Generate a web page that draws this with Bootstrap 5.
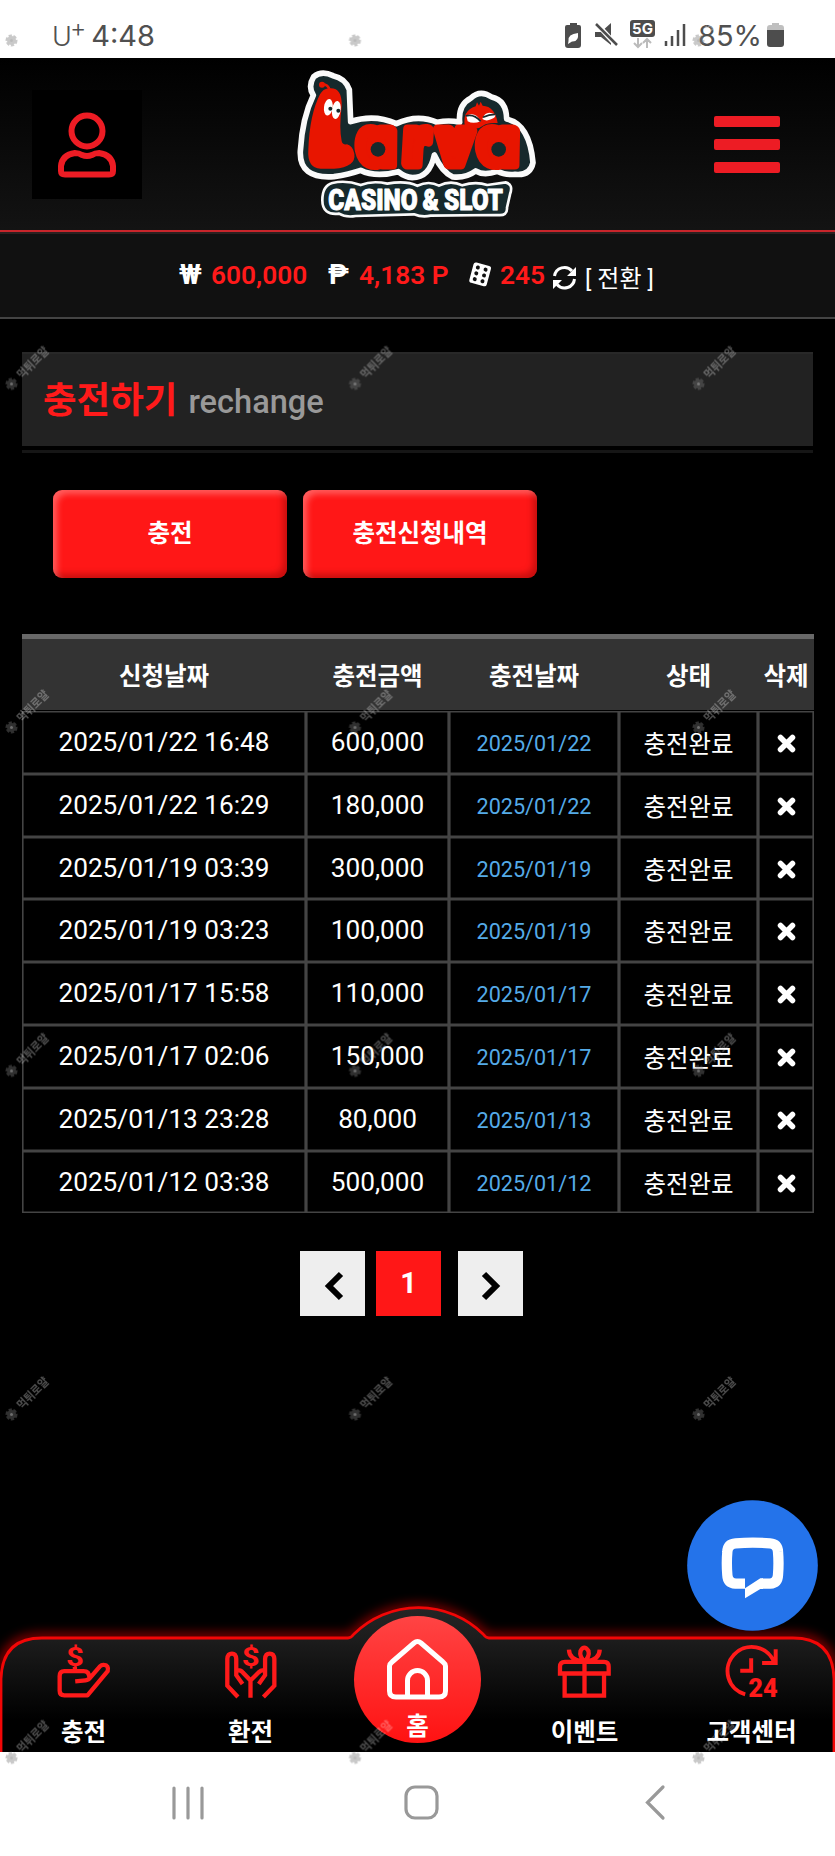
<!DOCTYPE html>
<html lang="ko">
<head>
    <meta charset="UTF-8">
    <meta name="viewport" content="width=device-width, initial-scale=1">
    <title>충전하기</title>
    <link href="https://cdn.jsdelivr.net/npm/bootstrap@5.3.0/dist/css/bootstrap.min.css" rel="stylesheet">
    <style>
        body {
            background: #000;
            color: #fff;
            font-family: Roboto, "Noto Sans CJK KR", sans-serif;
            height: 1856px;
            overflow: hidden;
            position: relative;
        }
        svg { display: block; flex: none; overflow: visible; }

        /* 상태바 */
        .status-bar {
            height: 58px;
            padding: 14px 51px 0 52px;
            background: #fff;
            color: #505050;
            font-family: Inter, sans-serif;
            font-size: 29px;
            line-height: 43px;
        }
        .status-bar sup { font-size: 25px; top: -9px; left: -2px; line-height: 0; }
        .carrier { font-size: 27px; font-weight: 300; margin-right: 3px; }

        /* 헤더 */
        .top-header {
            height: 174px;
            padding: 0 55px 0 32px;
            background: linear-gradient(#000, #131313);
            border-bottom: 2px solid #c9252b;
        }
        .user-link { width: 110px; height: 109px; padding-top: 2px; background: #000; }
        .logo { margin: -1px 0 0 -19px; }
        .hamburger span {
            display: block;
            width: 66px;
            height: 11px;
            margin-bottom: 12px;
            border-radius: 2px;
            background: #ed1c24;
        }
        .hamburger span:last-child { margin-bottom: 0; }

        .balance-bar {
            height: 87px;
            padding-left: 179px;
            background: #111;
            border-top: 2px solid #2c2020;
            border-bottom: 2px solid #444;
            font-size: 26.3px;
            font-weight: 700;
            line-height: 82px;
        }
        .balance-bar b { color: #ff1a1a; font-weight: 600; }
        .money-sign { font-size: 28px; }
        .convert { font-size: 24px; font-weight: 400; position: relative; top: 4px; }

        /* 타이틀 */
        main { padding: 33px 22px 0; }
        .page-title {
            height: 94px;
            padding-left: 21px;
            background: #222;
            border-top: 2px solid #282828;
        }
        .title-line { height: 3px; margin-top: 4px; background: #161616; }
        .page-title h1 { font-size: 36.500px; font-weight: 700; color: #ff1a1a; line-height: 94px; }
        .page-title h1 span { font-size: 32.600px; font-weight: 500; color: #999; margin-left: 2px; }

        .tab-buttons { padding: 37px 0 0 31px; gap: 16px; }
        .btn-tab {
            width: 234px;
            height: 88px;
            border: 0;
            border-radius: 9px;
            background: #ff1717;
            color: #fff;
            font-size: 24.500px;
            font-weight: 700;
            box-shadow: inset 5px 5px 6px -1px rgba(255, 255, 255, .3), inset -5px -5px 6px -1px rgba(110, 0, 0, .38);
        }

        /* 신청내역 */
        .history {
            width: 792px;
            margin: 56px 0 0;
            table-layout: fixed;
            border-collapse: separate;
            border-spacing: 0;
            text-align: center;
            color: #fff;
            font-size: 26.2px;
        }
        .history th {
            height: 77px;
            padding: 3px 0 0;
            background: #333;
            border-top: 5px solid #686868;
            border-bottom: 1px solid #000;
            font-size: 24.500px;
            line-height: 67px;
            white-space: nowrap;
        }
        .history td {
            height: 62.8px;
            padding: 0;
            border: 1.6px solid #444;
            box-shadow: inset 0 0 0 .6px #444;
            line-height: 60px;
            vertical-align: top;
            background: #000;
            color: #fff;
        }
        .history td.paid { padding-top: 4px; font-size: 21.6px; color: #55abe8; line-height: 56px; }
        .history td.state { padding-top: 5px; font-size: 24.500px; line-height: 55px; }
        .history td svg { margin: 22px auto 0; }

        .pager { gap: 12px; margin-top: 38px; padding-left: 278px; }
        .pager .page-link {
            width: 65px;
            height: 65px;
            padding: 0;
            border: 0;
            border-radius: 0 !important;
            background: #eee;
            color: #000;
            display: flex;
            align-items: center;
            justify-content: center;
        }
        .pager .active .page-link { background: #ff1717; color: #fff; font-size: 29px; font-weight: 700; }
        .pager .page-item:last-child { margin-left: 6px; }

        .chat-button { position: absolute; left: 687px; top: 1500px; }

        /* 하단 메뉴 */
        .bottom-menu { height: 115px; position: relative; }
        .menu-shape { position: absolute; left: 0; top: -60px; }
        .menu-item {
            width: 167px;
            position: relative;
            padding-top: 8px;
            color: #fff;
            font-size: 24.500px;
            font-weight: 700;
            line-height: 36px;
            text-decoration: none;
        }
        .menu-item svg { margin-bottom: 17px; }
        .home-item { padding-top: 2px; }
        .home-item svg { margin-bottom: 9px; }
        .system-nav { height: 104px; background: #fff; position: relative; }
        .system-nav svg { width: 100%; height: 104px; }
        .stamp { position: absolute; left: 0; top: 0; pointer-events: none; }
    </style>
</head>
<body class="d-flex flex-column">

    <div class="status-bar d-flex justify-content-between">
        <div><span class="carrier">U<sup>+</sup></span>4:48</div>
        <div class="d-flex">
            <svg width="132" height="30" viewBox="0 0 132 30" style="margin-top:6px" fill="#4d4d4d">
                <path d="M5 5V3h7v2h2q2 0 2 2v18q0 3-3 3H3q-3 0-3-3V7q0-2 2-2z"/>
                <path d="M3.500 21q-1-7 9.500-8q1 9-6 8.500L3 24z" fill="#fff"/>
                <path d="M30 12h6l10-9v22l-10-8h-6z"/>
                <path d="M31 3l21 23" stroke="#fff" stroke-width="5"/>
                <path d="M31 4l21 21" stroke="#4d4d4d" stroke-width="2.500"/>
                <rect x="65" y="0" width="25" height="17" rx="3"/>
                <text x="77.500" y="14" font-size="15" font-weight="700" text-anchor="middle" fill="#fff">5G</text>
                <path d="M73 18v9m-4-4l4 4l4-4M82 28v-9m-4 4l4-4l4 4" fill="none" stroke="#bbb" stroke-width="2"/>
                <path d="M101 21v5M107 16v10M113 10v16M119 4v22" stroke="#4d4d4d" stroke-width="2.500"/>
            </svg>
            <span style="width:65px" class="text-end">85%</span>
            <svg width="17" height="24" viewBox="0 0 17 24" style="margin:9px 0 0 5px">
                <path d="M5 2V0h7v2h2q3 0 3 3v3H0V5q0-3 3-3z" fill="#bfbfbf"/>
                <path d="M0 7h17v14q0 3-3 3H3q-3 0-3-3z" fill="#4d4d4d"/>
            </svg>
        </div>
    </div>

    <header class="top-header d-flex align-items-center justify-content-between">
        <a href="#" class="user-link d-flex align-items-center justify-content-center">
            <svg width="60" height="68" viewBox="0 0 60 68" fill="none" stroke="#ed1c24" stroke-width="6">
                <circle cx="30" cy="20" r="15.500"/>
                <path d="M4 60V55Q5 44 18 42Q22 42 25 44Q30 46 35 44Q38 42 42 42Q55 44 56 55V60Q56 63.500 52 63.500H8Q4 63.500 4 60Z"/>
            </svg>
        </a>
        <svg class="logo" width="280" height="165" viewBox="0 0 840 495">
            <path d="M64 270Q70 170 103 103Q86 76 104 47Q128 28 162 44Q200 52 211 86L215 182Q285 158 352 188Q415 158 475 184Q510 176 542 184Q537 132 575 112Q603 84 638 108Q682 118 683 174Q752 190 762 305Q754 345 708 340Q678 343 655 331Q615 345 590 330Q560 352 522 348Q490 335 466 282Q452 350 400 350Q378 348 358 332Q290 350 245 328Q210 340 165 347Q60 355 64 270Z" fill="#16292c" stroke="#fafafa" stroke-width="17" stroke-linejoin="round"/>
            <path d="M160 366Q200 356 245 372Q280 358 325 368Q380 358 415 374Q450 358 480 374Q515 356 550 373Q590 360 625 372L680 364Q704 370 693 400L684 440Q686 466 655 462L455 464Q430 470 405 460L230 465Q200 470 180 458Q130 464 130 418Q130 374 160 366Z" fill="#16292c" stroke="#fafafa" stroke-width="8"/>
            <!-- 빨간 애벌레 몸통 -->
            <path d="M148 82Q190 76 188 135Q180 200 188 240Q190 252 204 250Q222 256 226 278Q232 318 165 323H125Q84 322 88 265Q92 160 123 100Q132 84 148 82" fill="#e81500"/>
            <path d="M127 70Q147 68 152 88" fill="none" stroke="#e81500" stroke-width="8"/>
            <circle cx="129" cy="71" r="9" fill="#e81500"/>
            <ellipse cx="148" cy="139" rx="13" ry="25" fill="#fff" transform="rotate(8 148 139)"/>
            <ellipse cx="172" cy="147" rx="13" ry="27" fill="#fff" transform="rotate(8 172 147)"/>
            <circle cx="154" cy="143" r="6" fill="#16292c"/><circle cx="178" cy="149" r="6" fill="#16292c"/>
            <path d="M558 196Q548 150 590 136L594 124L600 134L605 122L611 134Q648 136 656 186Q625 184 612 194Q590 212 558 196Z" fill="#e81500"/>
            <path d="M562 164Q590 150 605 181Q582 190 566 181ZM610 174Q620 145 648 160Q652 170 636 175Q622 182 610 174Z" fill="#fff"/>
            <path d="M560 165Q585 158 605 181M612 169Q630 160 648 160" fill="none" stroke="#16292c" stroke-width="5"/>
            <g font-family="Open Sans, Noto Sans, sans-serif" font-weight="800" font-style="italic" font-size="184" fill="#e81500" stroke="#e81500" stroke-width="33" stroke-linejoin="round" stroke-linecap="round">
                <text transform="translate(245 309) skewX(12)" textLength="116" lengthAdjust="spacingAndGlyphs">a</text>
                <text transform="translate(380 309) skewX(8)" textLength="76" lengthAdjust="spacingAndGlyphs">r</text>
                <text transform="translate(488 309) skewX(10)" textLength="98" lengthAdjust="spacingAndGlyphs">v</text>
                <text transform="translate(607 309) skewX(12)" textLength="122" lengthAdjust="spacingAndGlyphs">a</text>
            </g>
            <circle cx="297" cy="265" r="22" fill="#16292c"/>
            <circle cx="659" cy="265" r="22" fill="#16292c"/>
            <text x="148" y="446" font-family="Roboto" font-weight="900" font-size="88" fill="#fff" stroke="#fff" stroke-width="3" stroke-linejoin="round" textLength="524" lengthAdjust="spacingAndGlyphs">CASINO&#8201;&amp;&#8201;SLOT</text>
        </svg>
        <a href="#" class="hamburger"><span></span><span></span><span></span></a>
    </header>

    <div class="balance-bar d-flex">
        <span class="money-sign" style="width:32px">₩</span>
        <b style="width:117px">600,000</b>
        <span class="money-sign" style="width:31px">₱</span>
        <b style="width:110px">4,183 P</b>
        <svg width="25" height="26" viewBox="0 0 25 26" style="margin:28px 7px 0 -1px">
            <g transform="rotate(15 12.500 13)">
                <rect x="3" y="2" width="18" height="21" rx="2.500" fill="#fff"/>
                <g fill="#111"><circle cx="8" cy="6.500" r="2"/><circle cx="16" cy="6.500" r="2"/><circle cx="8" cy="12.500" r="2"/><circle cx="16" cy="12.500" r="2"/><circle cx="8" cy="18.500" r="2"/><circle cx="16" cy="18.500" r="2"/></g>
            </g>
        </svg>
        <b style="width:52px">245</b>
        <svg width="25" height="26" viewBox="0 0 25 26" style="margin:31px 8px 0 0" fill="none" stroke="#fff" stroke-width="3">
            <path d="M2.500 11A10 10 0 0 1 20 6M22.500 14A10 10 0 0 1 5 19.500"/>
            <path d="M24 2v9h-9zM1 24v-9h9z" fill="#fff" stroke="none"/>
        </svg>
        <span class="convert">[ 전환 ]</span>
    </div>

    <main class="flex-grow-1">
        <div class="page-title"><h1 class="m-0">충전하기 <span>rechange</span></h1></div>
        <div class="title-line"></div>

        <div class="tab-buttons d-flex">
            <button class="btn btn-tab">충전</button>
            <button class="btn btn-tab">충전신청내역</button>
        </div>

        <table class="history">
            <colgroup>
                <col style="width:284px"><col style="width:143px"><col style="width:170px"><col style="width:139px"><col style="width:56px">
            </colgroup>
            <thead>
                <tr><th>신청날짜</th><th>충전금액</th><th>충전날짜</th><th>상태</th><th>삭제</th></tr>
            </thead>
            <tbody id="historyList"></tbody>
        </table>

        <ul class="pager pagination mb-0">
            <li class="page-item"><a class="page-link" href="#"><svg width="20" height="30" viewBox="0 0 20 30" style="margin:5px 0 0 2px"><path d="M17 3L5 15L17 27" fill="none" stroke="#000" stroke-width="6"/></svg></a></li>
            <li class="page-item active"><a class="page-link" href="#">1</a></li>
            <li class="page-item"><a class="page-link" href="#"><svg width="20" height="30" viewBox="0 0 20 30" style="margin:5px 0 0 0"><path d="M3 3L15 15L3 27" fill="none" stroke="#000" stroke-width="6"/></svg></a></li>
        </ul>
    </main>

    <nav class="bottom-menu d-flex text-center">
        <svg class="menu-shape" width="835" height="175" viewBox="0 0 835 175">
            <defs>
                <linearGradient id="menuFill" x1="0" y1="0" x2="0" y2="1"><stop offset="0" stop-color="#252525"/><stop offset=".22" stop-color="#1c1c1c"/><stop offset=".75" stop-color="#000"/></linearGradient>
                <linearGradient id="homeFill" x1="0" y1="0" x2="0" y2="1"><stop offset="0" stop-color="#ff4444"/><stop offset="1" stop-color="#ff1212"/></linearGradient>
                <filter id="glow" x="-5%" y="-30%" width="110%" height="160%"><feGaussianBlur stdDeviation="6"/></filter>
            </defs>
            <path d="M1 180V102Q2 61 42 61H348Q351 61 354 58A92 92 0 0 1 483 58Q486 61 489 61H793Q833 61 834 102V180" fill="none" stroke="#f00" stroke-width="7" opacity=".75" filter="url(#glow)"/>
            <path d="M1 180V102Q2 61 42 61H348Q351 61 354 57A92 92 0 0 1 483 57Q486 61 489 61H793Q833 61 834 102V180" fill="url(#menuFill)" stroke="#f20606" stroke-width="2.800"/>
            <circle cx="417.500" cy="102.500" r="63.500" fill="url(#homeFill)"/>
        </svg>
        <a href="#" class="menu-item">
            <svg class="mx-auto" width="53" height="53" viewBox="0 0 160 160" fill="none" stroke="#ff1a1a" stroke-width="13">
                <path d="M98 101Q98 79 80 79H22Q8 79 8 94V138Q8 152 22 152H92L153 79Q157 61 142 60Q135 59 129 65L101 98Q96 106 86 107L55 110" stroke-linejoin="round"/>
                <path d="M54 66v14"/>
                <text x="27" y="64" font-size="76" font-weight="700" fill="#ff1a1a" stroke="none" textLength="54" lengthAdjust="spacingAndGlyphs">$</text>
            </svg>충전</a>
        <a href="#" class="menu-item">
            <svg class="mx-auto" width="53" height="53" viewBox="0 0 160 160" fill="none" stroke="#ff1a1a" stroke-width="13">
                <path d="M42 157L10 123V42Q11 26 24 26Q36 26 37 42V91L56 118M38 76Q50 74 57 83L80 107V159M119 157L152 123V42Q151 26 138 26Q125 26 124 42V91L105 118M123 76Q112 74 104 83L80 107"/>
                <text x="54" y="64" font-size="76" font-weight="700" fill="#ff1a1a" stroke="none" textLength="54" lengthAdjust="spacingAndGlyphs">$</text>
            </svg>환전</a>
        <a href="#" class="menu-item home-item">
            <svg class="mx-auto" width="61" height="61" viewBox="0 0 61 61" fill="none" stroke="#fff" stroke-width="5">
                <path d="M2.500 27Q2.500 25 5 23L27 4Q30.500 1 34 4L56 23Q58.500 25 58.500 27V52Q58.500 58 52 58H9Q2.500 58 2.500 52Z"/>
                <path d="M20.500 58V41.500a10 10 0 0 1 20 0V58"/>
            </svg>홈</a>
        <a href="#" class="menu-item">
            <svg class="mx-auto" width="53" height="53" viewBox="0 0 160 160" fill="none" stroke="#ff1a1a" stroke-width="13">
                <path d="M6 86V66Q6 51 21 51H139Q153 51 153 66V86ZM20 86V153H139V86M80 51V153M80 50Q64 34 68 18Q79-2 92 18Q96 34 80 50ZM33 14Q34 43 70 49M126 14Q125 43 90 49"/>
            </svg>이벤트</a>
        <a href="#" class="menu-item">
            <svg class="mx-auto" width="53" height="53" viewBox="0 0 160 160" fill="none" stroke="#ff1a1a" stroke-width="12">
                <path d="M61 149A73 73 0 1 1 149 53M153 13V54H112M79 40V78H46"/>
                <text x="70" y="157" font-size="78" font-weight="900" fill="#ff1a1a" stroke="none" textLength="89" lengthAdjust="spacingAndGlyphs">24</text>
            </svg>고객센터</a>
    </nav>

    <div class="system-nav">
        <svg viewBox="0 0 835 104" fill="none" stroke="#999" stroke-width="3.200" stroke-linecap="round">
            <path d="M174 36v30M188 36v30M202 36v30"/>
            <rect x="406" y="35" width="31" height="31" rx="9"/>
            <path d="M663 35L647.500 50.500L663 66"/>
        </svg>
    </div>

    <a href="#" class="chat-button">
        <svg width="131" height="131" viewBox="816 60 393 393">
            <circle cx="1012.500" cy="256.500" r="196" fill="#2473ea"/>
            <path d="M990 311H962Q938 309 937 285Q934 250 937 215Q938 192 962 190Q1013 186 1065 190Q1088 192 1089 215Q1092 250 1089 285Q1088 309 1065 311H1040" fill="none" stroke="#fff" stroke-width="31"/>
            <path d="M990 296V355L1036 327H1044V295H1036L990 325Z" fill="#fff"/>
        </svg>
    </a>

    <!-- 배경 워터마크 -->
    <svg class="stamp" width="835" height="1856">
        <defs>
            <pattern id="stampTile" width="343.500" height="343.500" patternUnits="userSpaceOnUse">
                <circle cx="11.500" cy="40.500" r="4.500" fill="#777" stroke="#777" stroke-width="3" stroke-dasharray="3 1.500" opacity=".4"/>
                <circle cx="11.500" cy="40.500" r="1.500" fill="#aaa" opacity=".5"/>
                <text transform="translate(22 36) rotate(-45)" font-size="12" font-weight="700" fill="#fff" opacity=".3" textLength="39" lengthAdjust="spacingAndGlyphs">먹튀로얄</text>
            </pattern>
        </defs>
        <rect width="835" height="1856" fill="url(#stampTile)"/>
    </svg>

    <script>
        const historyData = [
            ['2025/01/22 16:48', '600,000'],
            ['2025/01/22 16:29', '180,000'],
            ['2025/01/19 03:39', '300,000'],
            ['2025/01/19 03:23', '100,000'],
            ['2025/01/17 15:58', '110,000'],
            ['2025/01/17 02:06', '150,000'],
            ['2025/01/13 23:28', '80,000'],
            ['2025/01/12 03:38', '500,000']
        ];

        // 신청내역 목록 출력
        document.getElementById('historyList').innerHTML = historyData.map(([date, amount]) => `
            <tr>
                <td>${date}</td>
                <td>${amount}</td>
                <td class="paid">${date.split(' ')[0]}</td>
                <td class="state">충전완료</td>
                <td><svg width="19" height="19" viewBox="0 0 19 19"><path d="M3.500 3.500L15.500 15.500M15.500 3.500L3.500 15.500" stroke="#fff" stroke-width="5.500" stroke-linecap="round"/></svg></td>
            </tr>`).join('');
    </script>
    <script src="https://cdn.jsdelivr.net/npm/bootstrap@5.3.0/dist/js/bootstrap.bundle.min.js"></script>
</body>
</html>
